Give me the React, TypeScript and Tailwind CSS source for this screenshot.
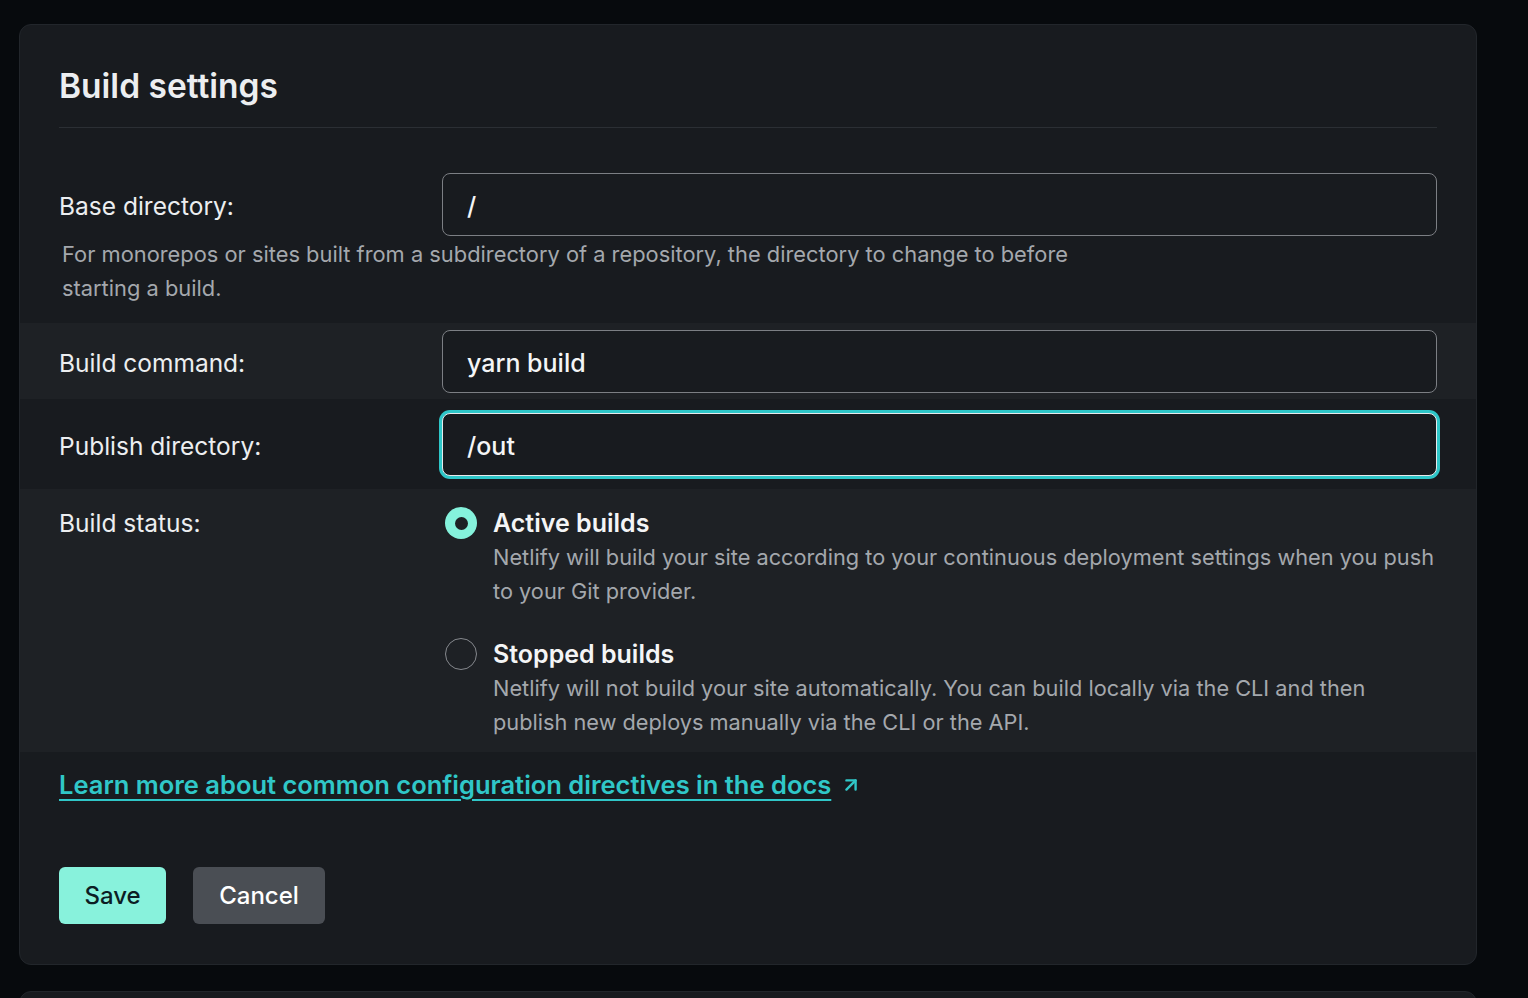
import { ArrowUpRight } from 'lucide-react';

const font = { fontFamily: 'Inter, "Noto Sans", sans-serif' };

function TextInput({ value, focused }: { value: string; focused?: boolean }) {
  return (
    <div
      className={
        focused
          ? 'flex h-[63px] flex-1 items-center rounded-lg border border-[#e8eaec] bg-[#181b1f] px-6 ring-[3px] ring-[#2ec6c8]'
          : 'flex h-[63px] flex-1 items-center rounded-lg border border-[#7c7f84] bg-[#181b1f] px-6'
      }
    >
      <span className="pt-[4px] text-[25px] font-medium text-[#f4f5f6]">{value}</span>
    </div>
  );
}

function Radio({ checked }: { checked?: boolean }) {
  if (checked) {
    return (
      <span className="mt-[1px] flex h-8 w-8 shrink-0 items-center justify-center rounded-full bg-[#85f2dc]">
        <span className="h-[13px] w-[13px] rounded-full bg-[#1d2024]" />
      </span>
    );
  }
  return <span className="mt-[1px] h-8 w-8 shrink-0 rounded-full border border-[#85888d]" />;
}

function StatusOption({ title, description, checked }: { title: string; description: string; checked?: boolean }) {
  return (
    <div className="flex gap-[16px] pl-[3px]">
      <Radio checked={checked} />
      <div>
        <p className="text-[25px] font-semibold leading-[34px] text-[#f4f5f6]">{title}</p>
        <p className="text-[21.75px] leading-[34px] text-[#a4a8ad]">{description}</p>
      </div>
    </div>
  );
}

export default function App() {
  return (
    <div className="min-h-screen bg-[#070a0d] pl-[19px] pt-[24px]" style={font}>
      <section className="w-[1458px] overflow-hidden rounded-xl border border-[#22262b] bg-[#181b1f]">
        <div className="px-[39px] pt-[38px]">
          <h2 className="border-b border-[#2b2f34] pb-[18px] text-[33.5px] font-semibold leading-[46px] text-[#eceef0]">
            Build settings
          </h2>
        </div>

        {/* base directory */}
        <div className="px-[39px] pb-[18px] pt-[45px]">
          <div className="flex items-center">
            <label className="mt-[4px] w-[383px] shrink-0 text-[24.5px] text-[#eceef0]">Base directory:</label>
            <TextInput value="/" />
          </div>
          <p className="mt-[1px] max-w-[1040px] pl-[3px] text-[21.85px] leading-[34px] text-[#a4a8ad]">
            For monorepos or sites built from a subdirectory of a repository, the directory to change to before starting a build.
          </p>
        </div>

        {/* build command */}
        <div className="flex items-center bg-[#1e2125] px-[39px] pb-[6px] pt-[7px]">
          <label className="mt-[4px] w-[383px] shrink-0 text-[24.5px] text-[#eceef0]">Build command:</label>
          <TextInput value="yarn build" />
        </div>

        {/* publish directory */}
        <div className="flex items-center px-[39px] pb-[13px] pt-[14px]">
          <label className="mt-[4px] w-[383px] shrink-0 text-[24.5px] text-[#eceef0]">Publish directory:</label>
          <TextInput value="/out" focused />
        </div>

        {/* build status */}
        <div className="flex bg-[#1e2125] px-[39px] pb-[13px] pt-[17px]">
          <label className="w-[383px] shrink-0 text-[24.5px] leading-[34px] text-[#eceef0]">Build status:</label>
          <div className="flex flex-1 flex-col gap-[29px]">
            <StatusOption
              checked
              title="Active builds"
              description="Netlify will build your site according to your continuous deployment settings when you push to your Git provider."
            />
            <StatusOption
              title="Stopped builds"
              description="Netlify will not build your site automatically. You can build locally via the CLI and then publish new deploys manually via the CLI or the API."
            />
          </div>
        </div>

        <div className="px-[39px] pb-10 pt-[16px]">
          <a href="#" className="inline-flex items-center gap-[9px] text-[25.5px] font-semibold leading-[34px] text-[#30c7c8]">
            <span className="underline decoration-2 underline-offset-[5px]">
              Learn more about common configuration directives in the docs
            </span>
            <ArrowUpRight className="h-[22px] w-[22px]" strokeWidth={2.6} />
          </a>

          <div className="mt-[65px] flex gap-[27px]">
            <button className="h-[57px] w-[107px] rounded-md bg-[#88f2dc] text-[24px] font-medium text-[#0c1d24]">Save</button>
            <button className="h-[57px] w-[132px] rounded-md bg-[#4a4e54] text-[24px] font-medium text-white">Cancel</button>
          </div>
        </div>
      </section>

      <section className="mt-[26px] h-[40px] w-[1458px] rounded-t-xl border border-[#22262b] bg-[#181b1f]" />
    </div>
  );
}
